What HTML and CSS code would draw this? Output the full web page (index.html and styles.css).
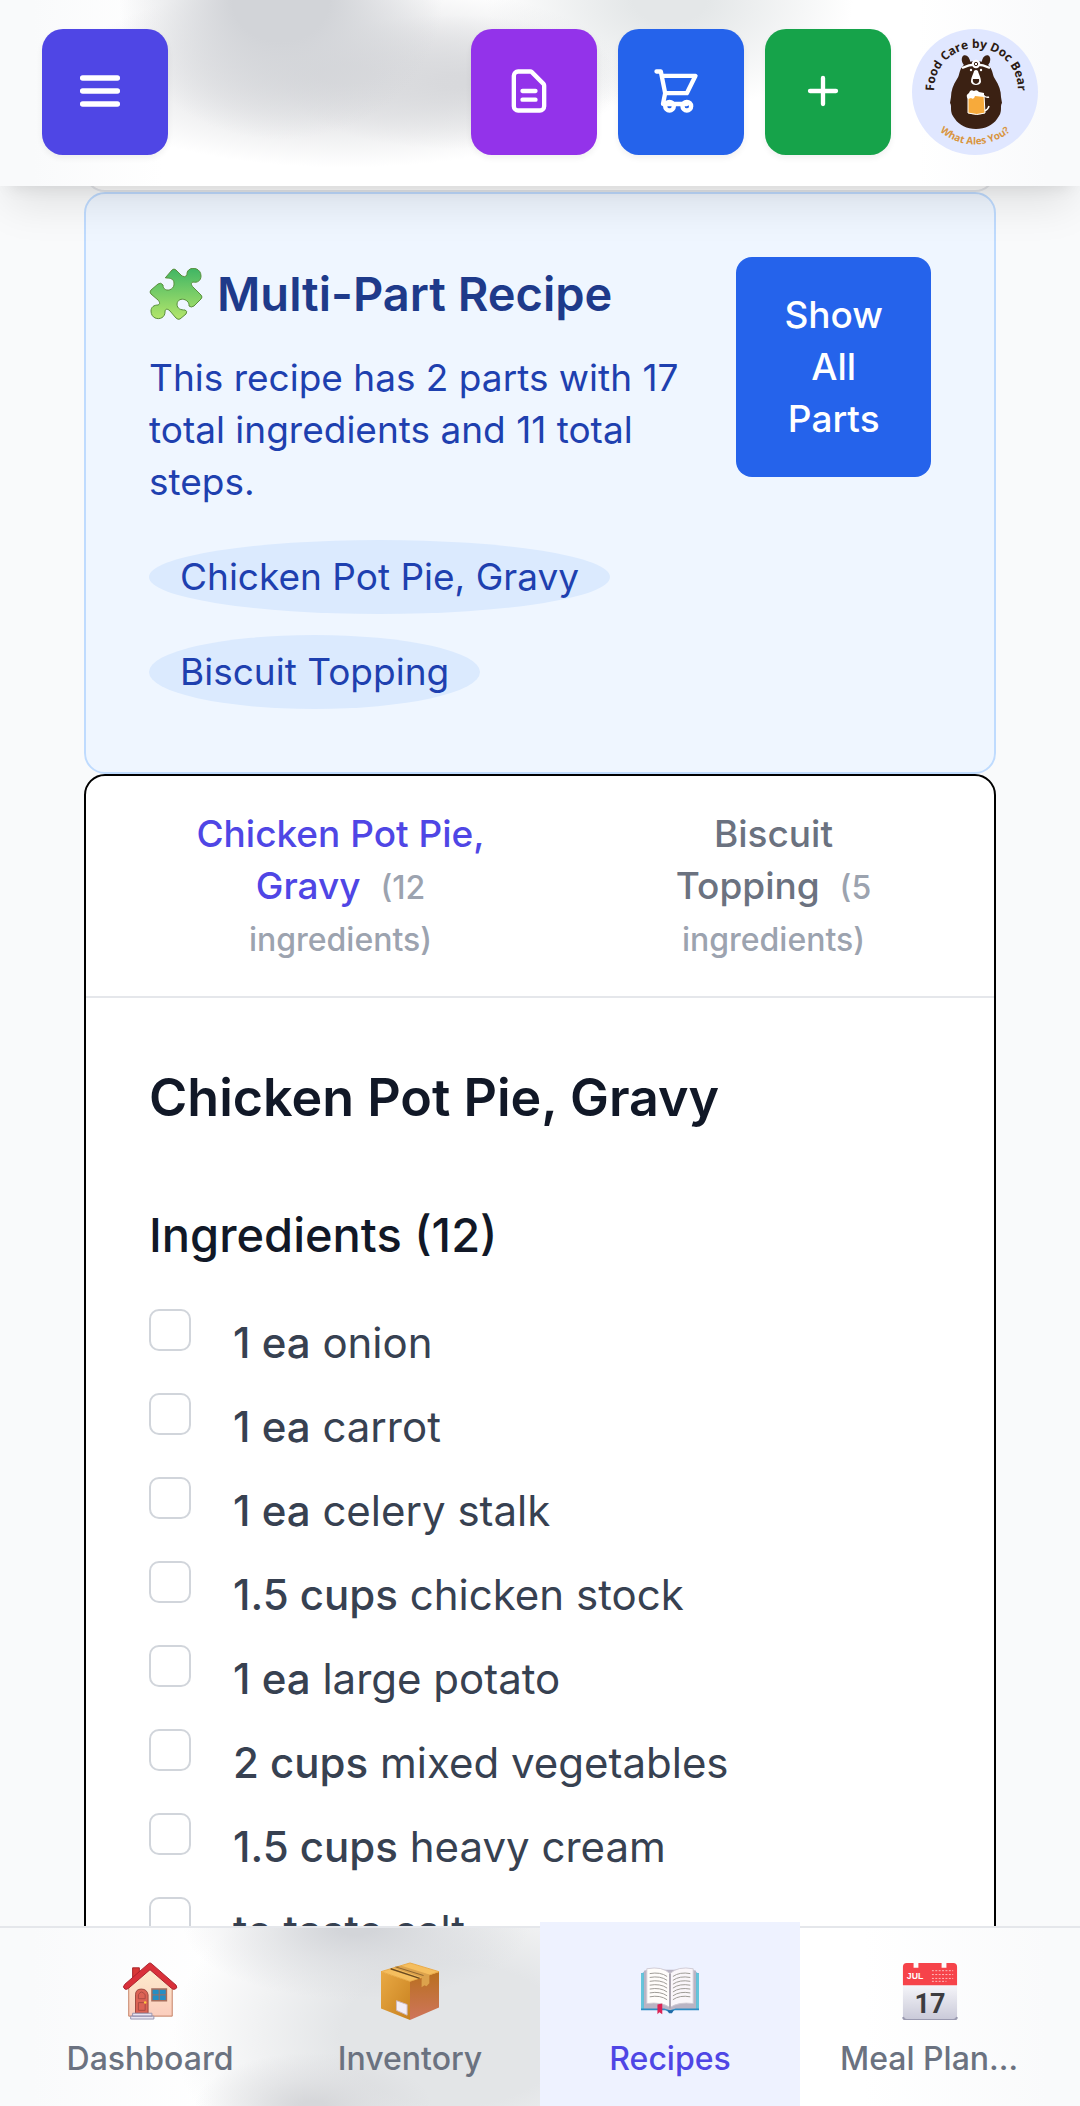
FILE: index.html
```html
<!DOCTYPE html>
<html lang="en">
<head>
<meta charset="utf-8">
<meta name="viewport" content="width=device-width, initial-scale=1">
<title>Recipe</title>
<link rel="stylesheet" href="styles.css">
</head>
<body>
<div class="app">
  <header class="topbar">
    <button class="icon-btn indigo" type="button" aria-label="Menu">
      <svg class="icon" viewBox="0 0 24 24"><path d="M4 6h16M4 12h16M4 18h16"/></svg>
    </button>
    <div class="actions">
      <button class="icon-btn purple" type="button" aria-label="Notes">
        <svg class="icon" viewBox="0 0 24 24"><path d="M9 12h6m-6 4h6m2 5H7a2 2 0 01-2-2V5a2 2 0 012-2h5.586a1 1 0 01.707.293l5.414 5.414a1 1 0 01.293.707V19a2 2 0 01-2 2z"/></svg>
      </button>
      <button class="icon-btn blue" type="button" aria-label="Shopping list">
        <svg class="icon" viewBox="0 0 24 24"><path d="M3 3h2l.4 2M7 13h10l4-8H5.4M7 13L5.4 5M7 13l-1 5h11m0-1a2 2 0 100 4 2 2 0 000-4zm-8 0a2 2 0 100 4 2 2 0 000-4z"/></svg>
      </button>
      <button class="icon-btn green" type="button" aria-label="Add">
        <svg class="icon" viewBox="0 0 24 24"><path d="M12 6v12M6 12h12"/></svg>
      </button>
      <a class="avatar" href="#" aria-label="Profile">
        <svg viewBox="0 0 126 126">
          <defs>
            <path id="arc-top" d="M23 70A42 42 0 1 1 105 70"/>
            <path id="arc-bottom" d="M11 76A54 54 0 0 0 115 76"/>
          </defs>
          <text class="logo-top"><textPath href="#arc-top" startOffset="50%">Food Care by Doc Bear</textPath></text>
          <text class="logo-bottom"><textPath href="#arc-bottom" startOffset="50%">What Ales You?</textPath></text>
          <g fill="#3b2113">
            <ellipse cx="54" cy="32" rx="4" ry="6" transform="rotate(-20 54 32)"/>
            <ellipse cx="74" cy="32" rx="4" ry="6" transform="rotate(20 74 32)"/>
            <path d="M64 32c-9 0-14 4-16 10-1 3-1 5-3 8-4 6-6 12-6 18l-1 6c1 1 1 3 1 5 0 5 1 7 4 11 4 6 12 10 21 10s17-4 21-10c3-4 4-6 4-11 0-2 0-4 1-5l-1-6c0-6-2-12-6-18-2-3-2-5-3-8-2-6-7-10-16-10z"/>
          </g>
          <path d="M50 39q14-7 28 0" fill="none" stroke="#fff" stroke-width="2.500"/>
          <circle cx="64" cy="35" r="4.200" fill="#fff"/>
          <circle cx="64" cy="35" r="1.700" fill="#fff" stroke="#3b2113"/>
          <circle cx="59" cy="41" r="1.200" fill="#fff"/><circle cx="69" cy="41" r="1.200" fill="#fff"/>
          <path d="M62 42q2-2 4 0c1 4 3 6 3 11q-1 3-5 3t-5-3c0-5 2-7 3-11z" fill="#fff"/>
          <path d="M61 50h6q1 4-3 5-4-1-3-5z" fill="#3b2113"/>
          <path d="M72 67q3 2 5 1M72 82q4-1 5-5" fill="none" stroke="#fff" stroke-width="1.500"/>
          <path d="M56 66h16l1 18q-8 3-17 0z" fill="#f7aa3b" stroke="#fff"/>
          <path d="M56 70q-3-4 1-6 1-4 5-2 3-2 5 1l5 1v4l-9-1q-1 4-4 2z" fill="#fff"/>
        </svg>
      </a>
    </div>
  </header>

  <main class="content">
    <section class="card previous" aria-hidden="true"></section>

    <section class="card summary">
      <div class="summary-text">
        <h2 class="summary-title">
          <svg class="puzzle" viewBox="0 0 54 52" aria-hidden="true">
            <defs><linearGradient id="pz" x1="0" y1="0" x2="0" y2="1"><stop offset="0" stop-color="#3fb564"/><stop offset="1" stop-color="#b4e66b"/></linearGradient></defs>
            <path d="M17 9l6-7q2-2 4 0l6 6q3 2 5-1c-1-9 14-9 14 1 0 5-4 7-8 6-3 1-1 4 0 5l8 8q2 2 0 4l-7 7q-3 2-5 0c1-7-11-10-12-2 0 5 4 6 8 6q3 1 1 4l-6 5q-2 1-4-1l-6-7c-3-3-5-2-5 1 0 9-14 9-14-1 0-4 3-6 7-6 3-1 1-4 0-5l-7-6q-2-2 0-4l7-6q3-2 5 1c0 8 12 6 11-2 0-4-4-5-7-5q-3 0-1-1z" fill="url(#pz)" stroke="#5a8f3c" stroke-width="1"/>
          </svg>
          Multi-Part Recipe
        </h2>
        <p class="summary-copy">This recipe has 2 parts with 17 total ingredients and 11 total steps.</p>
        <ul class="pills">
          <li class="pill">Chicken Pot Pie, Gravy</li>
          <li class="pill">Biscuit Topping</li>
        </ul>
      </div>
      <button class="show-all" type="button">Show All Parts</button>
    </section>

    <section class="card recipe">
      <div class="tabs" role="tablist">
        <button class="tab active" type="button" role="tab" aria-selected="true">Chicken Pot Pie, Gravy <span class="count">(12 ingredients)</span></button>
        <button class="tab" type="button" role="tab" aria-selected="false">Biscuit Topping <span class="count">(5 ingredients)</span></button>
      </div>
      <div class="part">
        <h2 class="part-title">Chicken Pot Pie, Gravy</h2>
        <h3 class="part-subtitle">Ingredients (12)</h3>
        <ul class="ingredients">
          <li><label class="ingredient"><input type="checkbox"><span><b>1 ea</b> onion</span></label></li>
          <li><label class="ingredient"><input type="checkbox"><span><b>1 ea</b> carrot</span></label></li>
          <li><label class="ingredient"><input type="checkbox"><span><b>1 ea</b> celery stalk</span></label></li>
          <li><label class="ingredient"><input type="checkbox"><span><b>1.5 cups</b> chicken stock</span></label></li>
          <li><label class="ingredient"><input type="checkbox"><span><b>1 ea</b> large potato</span></label></li>
          <li><label class="ingredient"><input type="checkbox"><span><b>2 cups</b> mixed vegetables</span></label></li>
          <li><label class="ingredient"><input type="checkbox"><span><b>1.5 cups</b> heavy cream</span></label></li>
          <li><label class="ingredient"><input type="checkbox"><span><b>to taste</b> salt</span></label></li>
        </ul>
      </div>
    </section>
  </main>

  <nav class="bottombar" aria-label="Main">
    <a class="nav-item" href="#">
      <svg class="emoji" viewBox="0 0 60 60" aria-hidden="true">
        <defs><linearGradient id="wall" x1="0" y1="0" x2="0" y2="1"><stop offset="0" stop-color="#fdeccd"/><stop offset="1" stop-color="#fbcdbd"/></linearGradient></defs>
        <path d="M12 6h7v14h-7z" fill="#d93636" stroke="#a82328"/>
        <path d="M8 26L30 6l23 20v30H8z" fill="url(#wall)" stroke="#c47f62"/>
        <path d="M30 1q1 0 3 2l24 21q2 3-1 4-2 1-4-1L30 8 8 27q-2 2-4 1-3-2 0-5L27 3q2-2 3-2z" fill="#d9303a" stroke="#a8202a"/>
        <path d="M15 53V34q0-6 6-6t7 6v19z" fill="#dc6355" stroke="#9b493f"/>
        <path d="M18 38v-4q3-6 7 0v4zM18 42h7v8h-7z" fill="none" stroke="#a94a42"/>
        <circle cx="25" cy="42" r="1.300" fill="#ffc83d"/>
        <path d="M32 28h15v12H32z" fill="#258ec4" stroke="#a56e5c" stroke-width="1.500"/><path d="M39.500 28v12M32 34h15" stroke="#a56e5c"/>
        <path d="M12 53h20v3H12zM10 56h24v3H10z" fill="#e9e5f2" stroke="#9692ad"/>
      </svg>
      <span class="nav-label">Dashboard</span>
    </a>
    <a class="nav-item" href="#">
      <svg class="emoji" viewBox="0 0 60 60" aria-hidden="true">
        <defs><linearGradient id="bl" x1="0" y1="0" x2="1" y2="1"><stop offset="0" stop-color="#e9a944"/><stop offset="1" stop-color="#c8811f"/></linearGradient>
        <linearGradient id="br" x1="0" y1="0" x2="0" y2="1"><stop offset="0" stop-color="#b86f1e"/><stop offset="1" stop-color="#cf755c"/></linearGradient></defs>
        <path d="M0 10L30 20v40L0 48z" fill="url(#bl)"/>
        <path d="M30 20l30-10v37L30 60z" fill="url(#br)"/>
        <path d="M0 10L30 1l30 9-30 10z" fill="#f5be5e" stroke="#e9a944"/>
        <path d="M10 7l30 10M17 5l28 9" stroke="#6b4a20" stroke-width="1.500"/>
        <path d="M13 6L42 16v10l3-2 2 1 3-3V13L21 4z" fill="#dca24c"/>
        <path d="M15 5l29 9" stroke="#8a642f"/>
        <path d="M16 40l11 4v11l-11-5z" fill="#f3edf6" stroke="#cdb9c0"/>
      </svg>
      <span class="nav-label">Inventory</span>
    </a>
    <a class="nav-item current" href="#" aria-current="page">
      <svg class="emoji" viewBox="0 0 60 60" aria-hidden="true">
        <path d="M0 12l5-2h50l5 2v38H35l-5 2-5-2H0z" fill="#2f8dc4"/>
        <path d="M0 12l3-1v37H0zM57 11l3 1v36h-3z" fill="#64c6dc"/>
        <path d="M3 9l4-1h46l4 1v39H36l-6 2-6-2H3z" fill="#b9b4c4"/>
        <path d="M6 7q16-3 24 5v35q-9-6-24-4z" fill="#fffdfb" stroke="#d0cbd5"/>
        <path d="M54 7q-16-3-24 5v35q9-6 24-4z" fill="#faf6fa" stroke="#d0cbd5"/>
        <path d="M9 12q11-2 18 3M9 16q11-2 18 3M9 20q11-2 18 3M9 24q11-2 18 3M9 28q11-2 18 3M9 32q11-2 18 3M9 36q11-2 18 3M51 12q-11-2-18 3M51 16q-11-2-18 3M51 20q-11-2-18 3M51 24q-11-2-18 3M51 28q-11-2-18 3M51 32q-11-2-18 3M51 36q-11-2-18 3" fill="none" stroke="#9b9893"/>
        <path d="M30 12v36" stroke="#aaa4b0" stroke-width="2"/>
        <path d="M17 44l5-1v11l-3-2-2 2z" fill="#dc2455"/><path d="M27 50h7l-2 3h-3z" fill="#1f6ba8"/>
      </svg>
      <span class="nav-label">Recipes</span>
    </a>
    <a class="nav-item" href="#">
      <svg class="emoji" viewBox="0 0 60 60" aria-hidden="true">
        <defs><linearGradient id="page" x1="0" y1="0" x2="0" y2="1"><stop offset="0" stop-color="#fafafd"/><stop offset="1" stop-color="#c9c9d8"/></linearGradient></defs>
        <path d="M2 20h56v36q0 4-4 4H6q-4 0-4-4z" fill="url(#page)"/>
        <path d="M2 57q1 3 4 3h48q3 0 4-3" fill="none" stroke="#9a9ab0" stroke-width="2"/>
        <path d="M2 24V5q0-4 4-4h7v5h5V1h24v5h5V1h7q4 0 4 4v19z" fill="#f6434a"/>
        <path d="M32 9h22M32 13h22M32 17h22M32 20h15" stroke="#ffc0c0" stroke-dasharray="2 1.500"/>
        <text class="cal-month" x="6" y="18">JUL</text>
        <text class="cal-day" x="30" y="53">17</text>
      </svg>
      <span class="nav-label">Meal Planning</span>
    </a>
  </nav>
</div>
</body>
</html>
```
FILE: styles.css
```css
* { box-sizing: border-box; }

body {
  margin: 0;
  background: #f9fafb;
  color: #111827;
  font-family: Inter, "Liberation Sans", sans-serif;
}

h2, h3, p, ul { margin: 0; padding: 0; }
ul { list-style: none; }
button { border: 0; font-family: inherit; cursor: pointer; }
a { text-decoration: none; }

.app {
  display: flex;
  flex-direction: column;
  height: 100vh;
}

/* Top bar */
.topbar {
  position: relative;
  z-index: 2;
  display: flex;
  justify-content: space-between;
  align-items: flex-start;
  padding: 29px 42px 31px;
  background:
    radial-gradient(ellipse 15% 75% at 26% 0, #d2d4d8 30%, #d2d4d880 65%, #d2d4d800),
    radial-gradient(ellipse 26% 50% at 32% 40%, #d9dadd 10%, #d9dadd99 50%, #d9dadd00),
    radial-gradient(ellipse 16% 36% at 42% 44%, #d6d7da 10%, #d6d7da80 50%, #d6d7da00),
    radial-gradient(ellipse 17% 60% at 62% 0, #e4e7e8 20%, #e4e7e880 60%, #e4e7e800),
    linear-gradient(90deg, #f9fafb 3%, #ffffff 15%, #ffffff 85%, #f9fafb 97%);
  box-shadow: 0 26px 40px -8px rgba(0, 0, 0, 0.1), 0 10px 16px -10px rgba(0, 0, 0, 0.1);
}

.actions { display: flex; gap: 21px; }

.icon-btn {
  display: flex;
  align-items: center;
  justify-content: center;
  width: 126px;
  height: 126px;
  padding: 0 10px 2px 0;
  border-radius: 21px;
  box-shadow: 0 3px 6px rgba(0, 0, 0, 0.06);
}
.indigo { background: #4f46e5; }
.purple { background: #9333ea; }
.blue { background: #2563eb; }
.green { background: #16a34a; }

.icon {
  width: 52px;
  height: 52px;
  fill: none;
  stroke: #ffffff;
  stroke-width: 2;
  stroke-linecap: round;
  stroke-linejoin: round;
}
.indigo .icon { stroke-width: 2.5; }

.avatar {
  width: 126px;
  height: 126px;
  border-radius: 50%;
  background: #e0e7ff;
}
.avatar svg { display: block; }
.logo-top, .logo-bottom {
  font-family: "Open Sans", sans-serif;
  font-weight: 700;
  text-anchor: middle;
}
.logo-top { font-size: 12px; fill: #2b1a12; }
.logo-bottom { font-size: 10px; fill: #d9953f; }

/* Scrolling content */
.content {
  flex: 1;
  min-height: 0;
  padding: 0 84px;
  overflow-y: auto;
  scrollbar-width: none;
}

.card {
  border: 2px solid #e5e7eb;
  border-radius: 21px;
  background: #ffffff;
}

.previous { height: 48px; margin-top: -42px; }

.summary {
  display: flex;
  justify-content: space-between;
  align-items: flex-start;
  gap: 42px;
  padding: 63px;
  border-color: #bfdbfe;
  background: #eff6ff;
}

.summary-title {
  display: flex;
  align-items: center;
  gap: 14px;
  color: #1e3a8a;
  font-size: 47px;
  font-weight: 600;
  line-height: 74px;
}
.puzzle { width: 54px; height: 52px; }

.summary-copy {
  margin-top: 21px;
  color: #1e40af;
  font-size: 37px;
  line-height: 52px;
}

.pills {
  display: flex;
  flex-direction: column;
  align-items: flex-start;
  gap: 21px;
  margin-top: 32px;
}
.pill {
  padding: 11px 31px;
  border-radius: 50%;
  background: #dbeafe;
  color: #1e40af;
  font-size: 37px;
  line-height: 52px;
}

.show-all {
  width: min-content;
  padding: 32px 48px;
  border-radius: 16px;
  background: #2563eb;
  color: #ffffff;
  font-size: 37px;
  font-weight: 500;
  line-height: 52px;
}

.recipe { border-color: #000000; }

.tabs {
  display: grid;
  grid-template-columns: 383fr 315fr;
  gap: 84px;
  padding: 0 63px;
  border-bottom: 2px solid #e5e7eb;
}
.tab {
  padding: 32px 31px;
  background: none;
  color: #6b7280;
  font-size: 37px;
  font-weight: 500;
  line-height: 52px;
}
.tab.active { color: #4f46e5; }
.count {
  margin-left: 10px;
  color: #9ca3af;
  font-size: 32px;
  line-height: 42px;
}

.part { padding: 63px; }
.part-title { font-size: 52px; font-weight: 600; line-height: 74px; }
.part-subtitle {
  margin-top: 63px;
  font-size: 47px;
  font-weight: 500;
  line-height: 74px;
}

.ingredients {
  display: flex;
  flex-direction: column;
  gap: 16px;
  margin-top: 37px;
}
.ingredient {
  display: flex;
  align-items: flex-start;
  gap: 42px;
  color: #374151;
  font-size: 42px;
  line-height: 68px;
}
.ingredient b { font-weight: 500; }
.ingredient input {
  appearance: none;
  width: 42px;
  height: 42px;
  margin: 0;
  border: 2px solid #d1d5db;
  border-radius: 10px;
  background: #ffffff;
}

/* Bottom navigation */
.bottombar {
  position: relative;
  z-index: 2;
  display: grid;
  grid-template-columns: repeat(4, 1fr);
  padding: 0 20px;
  border-top: 2px solid #e5e7eb;
  background:
    radial-gradient(ellipse 16% 40% at 33% 0, #d3d5d9 10%, #d3d5d980 50%, #d3d5d900),
    radial-gradient(ellipse 11% 30% at 29% 100%, #d6d7da 10%, #d6d7da80 50%, #d6d7da00),
    radial-gradient(ellipse 26% 100% at 42% 60%, #e3e5e7 40%, #e3e5e780 70%, #e3e5e700),
    linear-gradient(90deg, #f9fafb 3%, #ffffff 20%, #ffffff 80%, #f9fafb 97%);
}
.nav-item {
  display: flex;
  flex-direction: column;
  align-items: center;
  gap: 18px;
  min-width: 0;
  margin-top: -6px;
  padding: 40px 40px 26px;
  color: #6b7280;
}
.nav-item.current { background: #eef2ff; color: #4f46e5; }
.emoji { width: 58px; height: 58px; }
.nav-label {
  max-width: 100%;
  overflow: hidden;
  font-size: 32px;
  font-weight: 500;
  line-height: 42px;
  text-overflow: ellipsis;
  white-space: nowrap;
}
.cal-month { fill: #ffffff; font: 700 9px "Liberation Sans", sans-serif; }
.cal-day {
  fill: #3c3c40;
  font: 700 28px Roboto, sans-serif;
  text-anchor: middle;
}
```
